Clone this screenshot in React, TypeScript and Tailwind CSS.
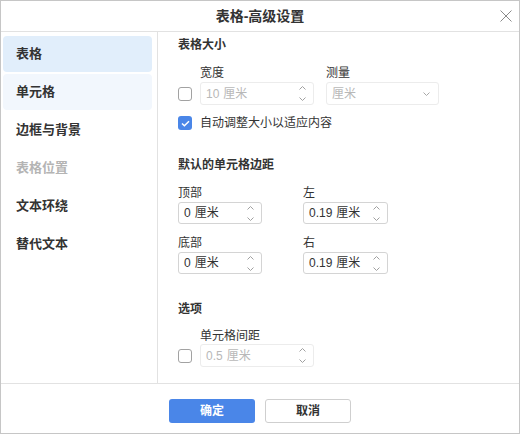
import React from 'react';

const font = { fontFamily: '"Liberation Sans", "Noto Sans CJK SC", sans-serif' };

const Chevron = ({ dir }: { dir: 'up' | 'down' }) => (
    <svg width="7" height="4" viewBox="0 0 7 4" className="block">
        <path d={dir === 'up' ? 'M0.5 3.5 L3.5 0.5 L6.5 3.5' : 'M0.5 0.5 L3.5 3.5 L6.5 0.5'} fill="none" stroke="#a0a0a0" strokeWidth="1" />
    </svg>
);

const Spin = ({ value, width, disabled }: { value: string; width: string; disabled?: boolean }) => (
    <div className={`${width} h-full flex items-center justify-between pl-[5px] pr-[7px] rounded-[3px] border ${disabled ? 'border-[#ececec] text-[#b8b8b8]' : 'border-[#d4d4d4] text-[#333]'} text-[12px]`}>
        <span>
            {value}
            <span className="ml-[4px]">厘米</span>
        </span>
        <div className="flex flex-col gap-[7px]">
            <Chevron dir="up" />
            <Chevron dir="down" />
        </div>
    </div>
);

const Check = ({ checked }: { checked?: boolean }) =>
    checked ? (
        <div className="w-[14px] h-[14px] rounded-[3px] bg-[#4a86e8] flex items-center justify-center shrink-0">
            <svg width="9" height="7" viewBox="0 0 9 7">
                <path d="M1 3.5 L3.4 5.8 L8 1.2" fill="none" stroke="#fff" strokeWidth="1.5" />
            </svg>
        </div>
    ) : (
        <div className="w-[14px] h-[14px] rounded-[3px] border border-[#a2a2a2] bg-white shrink-0" />
    );

const navItems = ['表格', '单元格', '边框与背景', '表格位置', '文本环绕', '替代文本'];

export default function App() {
    return (
        <div style={font} className="w-[520px] h-[434px] bg-white border border-[#c6c6c6] flex flex-col text-[#333]">
            {/* header */}
            <div className="h-[31px] border-b border-[#e2e2e2] flex items-center justify-center relative shrink-0">
                <span className="text-[14px] font-bold">表格-高级设置</span>
                <svg width="12" height="12" viewBox="0 0 12 12" className="absolute right-[7px] top-[9px]">
                    <path d="M0.5 0.5 L11.5 11.5 M11.5 0.5 L0.5 11.5" stroke="#8a8a8a" strokeWidth="1" />
                </svg>
            </div>

            {/* body */}
            <div className="h-[351px] flex shrink-0">
                <div className="w-[157px] border-r border-[#e2e2e2] pt-[4px] pl-[2px] pr-[5px] flex flex-col gap-[2px]">
                    {navItems.map((n, i) => (
                        <div
                            key={n}
                            className={`h-[36px] rounded-[4px] flex items-center pl-[13px] text-[13px] font-bold ${i === 0 ? 'bg-[#e1eefb]' : i === 1 ? 'bg-[#f2f7fd]' : ''} ${i === 3 ? 'text-[#b4b4b4]' : 'text-[#333]'}`}
                        >
                            {n}
                        </div>
                    ))}
                </div>

                <div className="flex-1 pl-[20px] pt-[5px] text-[12px]">
                    <div className="h-[16px] flex items-center font-bold">表格大小</div>
                    <div className="mt-[12px] h-[16px] flex">
                        <div className="ml-[22px] w-[126px] flex items-center">宽度</div>
                        <div className="flex items-center">测量</div>
                    </div>
                    <div className="mt-[1px] h-[23px] flex items-center">
                        <Check />
                        <div className="ml-[8px] h-full">
                            <Spin value="10" width="w-[114px]" disabled />
                        </div>
                        <div className="ml-[12px] w-[113px] h-full flex items-center justify-between pl-[5px] pr-[8px] rounded-[3px] border border-[#ececec] text-[#b8b8b8]">
                            <span>厘米</span>
                            <svg width="7" height="4" viewBox="0 0 7 4">
                                <path d="M0.5 0.5 L3.5 3.5 L6.5 0.5" fill="none" stroke="#a8a8a8" strokeWidth="1" />
                            </svg>
                        </div>
                    </div>
                    <div className="mt-[10px] h-[16px] flex items-center">
                        <Check checked />
                        <span className="ml-[8px]">自动调整大小以适应内容</span>
                    </div>

                    <div className="mt-[26px] h-[16px] flex items-center font-bold">默认的单元格边距</div>
                    <div className="mt-[12px] grid grid-cols-[125px_85px]">
                        <div className="h-[16px] flex items-center">顶部</div>
                        <div className="h-[16px] flex items-center">左</div>
                        <div className="mt-[1px] h-[22px]"><Spin value="0" width="w-[84px]" /></div>
                        <div className="mt-[1px] h-[22px]"><Spin value="0.19" width="w-[85px]" /></div>
                        <div className="mt-[11px] h-[16px] flex items-center">底部</div>
                        <div className="mt-[11px] h-[16px] flex items-center">右</div>
                        <div className="mt-[1px] h-[22px]"><Spin value="0" width="w-[84px]" /></div>
                        <div className="mt-[1px] h-[22px]"><Spin value="0.19" width="w-[85px]" /></div>
                    </div>

                    <div className="mt-[27px] h-[16px] flex items-center font-bold">选项</div>
                    <div className="mt-[11px] h-[16px] ml-[22px] flex items-center">单元格间距</div>
                    <div className="h-[23px] flex items-center">
                        <Check />
                        <div className="ml-[8px] h-full">
                            <Spin value="0.5" width="w-[114px]" disabled />
                        </div>
                    </div>
                </div>
            </div>

            {/* footer */}
            <div className="h-[50px] border-t border-[#e2e2e2] flex justify-center gap-[10px] pt-[15px] shrink-0">
                <button className="w-[86px] h-[24px] rounded-[3px] bg-[#4a86e8] text-white text-[12px] font-bold">确定</button>
                <button className="w-[86px] h-[24px] rounded-[3px] border border-[#cfcfcf] bg-white text-[#333] text-[12px] font-bold">取消</button>
            </div>
        </div>
    );
}
